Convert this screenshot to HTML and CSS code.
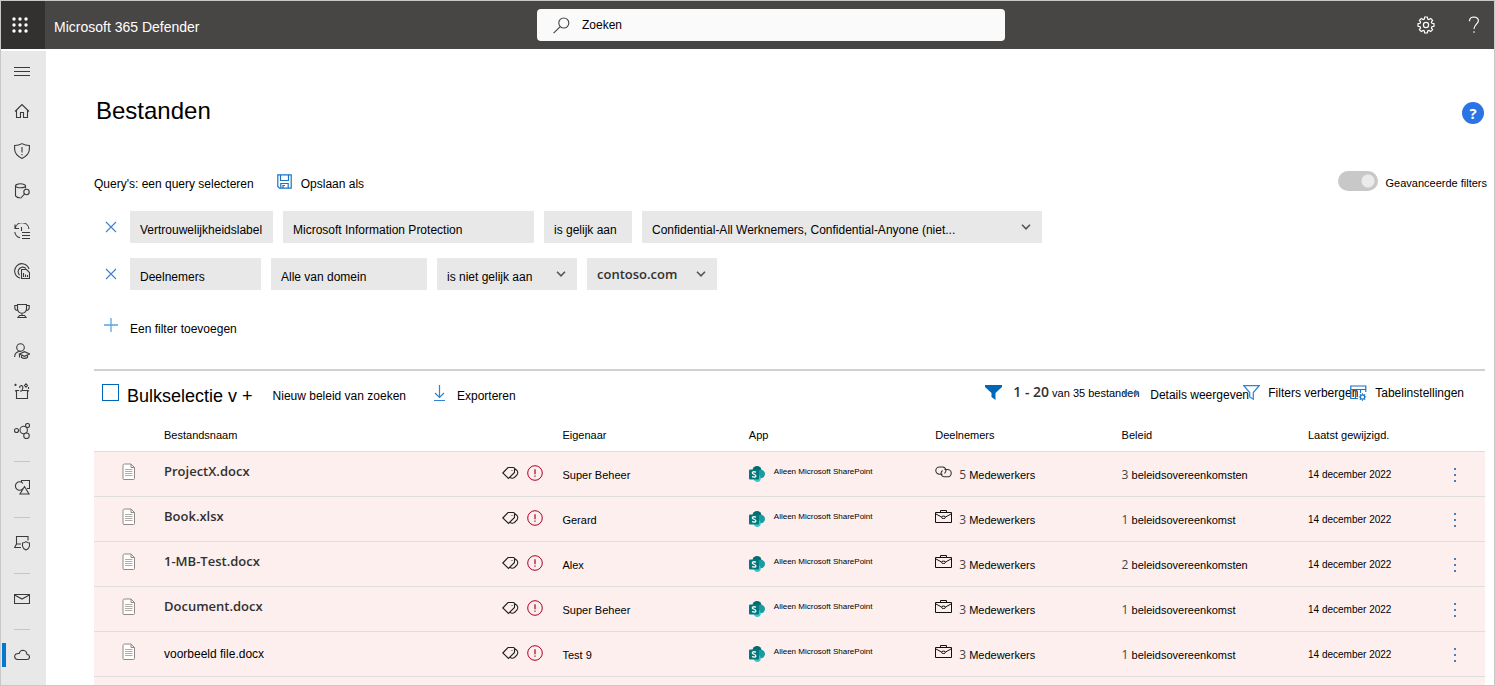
FILE: index.html
```html
<!DOCTYPE html>
<html lang="nl">
<head>
<meta charset="utf-8">
<title>Bestanden - Microsoft 365 Defender</title>
<link rel="stylesheet" href="styles.css">
</head>
<body>
<svg class="sprite" aria-hidden="true">
  <symbol id="doc" viewBox="0 0 14 18"><path d="M1 2.500Q1 1 2.500 1H9L12.500 4.500V15.500Q12.500 16.500 11.500 16.500H2Q1 16.500 1 15.500ZM9 1V4.500H12.500" fill="#fff" stroke="#8f8a88"/><path d="M3 6.500H10.500M3 8.500H10.500M3 10.500H10.500M3 12.500H10.500" stroke="#b0acaa" fill="none"/></symbol>
  <symbol id="tag" viewBox="0 0 17 16"><path d="M.8 8 6 2.500H11.500Q12.500 2.500 12.500 3.500V7.500L6.500 13.500ZM12.500 3.500 15 5.500Q16.500 7.500 15 10L12.500 12.500Q10 14 8 12.300M10 5V5.800" fill="none" stroke="#222" stroke-width="1.100"/></symbol>
  <symbol id="alert" viewBox="0 0 16 16"><circle cx="8" cy="8" r="7.300" fill="none" stroke="#a80025"/><path d="M8 4.200V9.200M8 10.500V11.800" stroke="#a80025" stroke-width="1.200"/></symbol>
  <symbol id="sp" viewBox="0 0 16 16"><circle cx="8" cy="4.500" r="4.500" fill="#036c70"/><circle cx="11.800" cy="8" r="4.200" fill="#1a9ba1"/><circle cx="8.300" cy="12.500" r="3.400" fill="#37c6d0"/><rect y="3.500" width="10" height="10" rx="1" fill="#03787c"/><path d="M7 6.200Q3.300 5 3.300 6.900C3.300 8.300 6.900 8.200 6.900 9.900Q6.900 11.700 3 10.700" fill="none" stroke="#fff" stroke-width="1.300"/></symbol>
  <symbol id="case" viewBox="0 0 17 14"><path d="M.5 2.500H16.500V12.500H.5ZM5.500 2.500V.5H11.500V2.500M1 4 6.500 7M10.500 7 16 4" fill="none" stroke="#111"/><ellipse cx="8.500" cy="7.300" rx="2" ry="1.200" fill="none" stroke="#111"/></symbol>
  <symbol id="link" viewBox="0 0 17 12"><path d="M7.500 8.200H4.500A3.700 3.600 0 0 1 4.500 1H7.500Q10.500 1.200 11 4.300 10.800 6.500 9.500 7.500M9.500 3.500H12.500A3.700 3.600 0 0 1 12.500 10.800H9.500Q6.500 10.500 6 7.500 6.200 5.500 7.500 4.500" fill="none" stroke="#333" stroke-width="1.100"/></symbol>
  <symbol id="dots" viewBox="0 0 4 16"><path d="M1 1H3V3H1ZM1 7H3V9H1ZM1 13H3V15H1Z" fill="#4a7dc0"/></symbol>
  <symbol id="chev" viewBox="0 0 10 6"><path d="M1 .8 5 4.800 9 .8" fill="none" stroke="#555" stroke-width="1.600"/></symbol>
  <symbol id="x" viewBox="0 0 12 12"><path d="M1 1 11 11M11 1 1 11" stroke="#3f7fd0" stroke-width="1.100"/></symbol>
</svg>
<div class="app">
  <header class="topbar">
    <button class="waffle" aria-label="Startprogramma voor apps"><svg width="16" height="16" viewBox="0 0 16 16" fill="#fff"><circle cx="2" cy="2" r="1.700"/><circle cx="8" cy="2" r="1.700"/><circle cx="14" cy="2" r="1.700"/><circle cx="2" cy="8" r="1.700"/><circle cx="8" cy="8" r="1.700"/><circle cx="14" cy="8" r="1.700"/><circle cx="2" cy="14" r="1.700"/><circle cx="8" cy="14" r="1.700"/><circle cx="14" cy="14" r="1.700"/></svg></button>
    <span class="brand">Microsoft 365 Defender</span>
    <label class="search"><svg width="17" height="17" viewBox="0 0 17 17" fill="none" stroke="#444" stroke-width="1.100"><circle cx="10.800" cy="6" r="5"/><path d="M7.200 9.600.6 16.200"/></svg><input type="text" placeholder="Zoeken" aria-label="Zoeken"></label>
    <div class="topactions">
      <button aria-label="Instellingen"><svg width="18" height="18" viewBox="0 0 18 18" fill="none" stroke="#fff" stroke-width="1.200"><circle cx="9" cy="9" r="2.600"/><path d="M7.700 1H10.300L10.700 3.100 11.900 3.600 13.700 2.400 15.600 4.300 14.400 6.100 14.900 7.300 17 7.700V10.300L14.900 10.700 14.400 11.900 15.600 13.700 13.700 15.600 11.900 14.400 10.700 14.900 10.300 17H7.700L7.300 14.900 6.100 14.400 4.300 15.600 2.400 13.700 3.600 11.900 3.100 10.700 1 10.300V7.700L3.100 7.300 3.600 6.100 2.400 4.300 4.300 2.400 6.100 3.600 7.300 3.100Z"/></svg></button>
      <button aria-label="Help"><svg width="12" height="18" viewBox="0 0 12 18" fill="none" stroke="#fff" stroke-width="1.200"><path d="M1.500 5.200V4.500Q2 1 5.800 1 10.300 1.200 10.400 4.800C10.400 8 6 8.500 6 13M6 15.200V16.800"/></svg></button>
    </div>
  </header>
  <div class="body">
    <nav class="rail" aria-label="Navigatie">
      <button aria-label="Menu"><svg width="16" height="16" viewBox="0 0 16 16"><path d="M0 4.500H16M0 8.500H16M0 12.500H16"/></svg></button>
      <button aria-label="Start"><svg width="16" height="16" viewBox="0 0 16 16"><path d="M1 8.500 8 1.500 15 8.500M2.500 7.500V14.500H6.500V9.500H9.500V14.500H13.500V7.500"/></svg></button>
      <button aria-label="Incidenten"><svg width="16" height="16" viewBox="0 0 16 16"><path d="M.6 2.500Q5 2.500 8 .6 11 2.500 15.400 2.500V6Q15.200 12 8 15.400 .8 12 .6 6ZM8 4V9.500M8 11V12.300"/></svg></button>
      <button aria-label="Opsporing"><svg width="16" height="16" viewBox="0 0 16 16"><ellipse cx="6.500" cy="2.800" rx="5" ry="2"/><path d="M1.500 2.800V12.500Q2 14.500 6 14.800M11.500 2.800V5.500"/><circle cx="12.500" cy="9" r="2.700"/><path d="M10.500 11 6.500 15.300"/></svg></button>
      <button aria-label="Acties"><svg width="16" height="16" viewBox="0 0 16 16"><path d="M1 1.500V5.500H5M1.200 5.300A7 7 0 0 1 15 6M.8 9A7 7 0 0 0 6 14.800M7.500 4V8M8 9.500H16M8 12.500H16M8 15.500H16"/></svg></button>
      <button aria-label="Bedreigingsanalyse"><svg width="16" height="16" viewBox="0 0 16 16"><path d="M6 15A7.300 7.300 0 1 1 15 6M5.500 12A4.500 4.500 0 1 1 12 5.500M7.500 6.500H12.500L15.500 9.500V15.500H7.500ZM9.500 10V14M11.500 11.500V14M13.500 12V14"/></svg></button>
      <button aria-label="Securescore"><svg width="16" height="16" viewBox="0 0 16 16"><path d="M3.500 1.500H12.500V6Q12 10 8 10.200 4 10 3.500 6ZM3.500 2.500H.8V5Q1 7.500 4 7.500M12.500 2.500H15.200V5Q15 7.500 12 7.500M8 10.500V12.500M5.500 12.500H10.500L12 14.500H4Z"/></svg></button>
      <button aria-label="Leerhub"><svg width="16" height="16" viewBox="0 0 16 16"><circle cx="6.500" cy="4.500" r="3.800"/><path d="M.6 14Q.8 8.500 6.500 8.300M5.500 11 10.500 8.700 15.600 11 10.500 13.300ZM7.500 12V14.500Q10.500 16.200 13.500 14.500V12M5.500 11V14.500"/></svg></button>
      <button aria-label="Proefversies"><svg width="16" height="16" viewBox="0 0 16 16"><path d="M5 7.500H2.500V15.500H13.500V7.500H8Q7 9 6 7.500M2.500 8.500 1 7.500M13.500 8.500 15 7.500M8 7Q10 3.500 7.500 2.500 5 3 6 5M1.500 .8V3M.4 1.900H2.600M12 .8 13.500 2.500 12 4.200 10.500 2.500ZM14.500 4V6"/></svg></button>
      <button aria-label="Partners"><svg width="16" height="16" viewBox="0 0 16 16"><circle cx="2.500" cy="7.500" r="2"/><circle cx="9.700" cy="7" r="3.700"/><circle cx="13.500" cy="2.500" r="2" fill="#e8e8e8"/><circle cx="12.500" cy="12.800" r="2.800" fill="#e8e8e8"/></svg></button>
      <hr>
      <button aria-label="Bronnen"><svg width="16" height="16" viewBox="0 0 16 16"><path d="M7.500 3V1.500H15.500V9.500H13M10.500 7.500 15 15H6ZM9 9.500A4.200 4.200 0 1 1 9 4.500"/></svg></button>
      <hr>
      <button aria-label="Apparaten"><svg width="16" height="16" viewBox="0 0 16 16"><path d="M2.500 9V1.500H14V5.500M2.500 9 .6 12.500H7M2.500 9H7M8.500 8Q10.500 8 12 6.700 13.500 8 15.500 8V11Q15.200 13.500 12 15 8.800 13.500 8.500 11Z"/></svg></button>
      <hr>
      <button aria-label="E-mail"><svg width="16" height="16" viewBox="0 0 16 16"><path d="M.5 3.500H15.500V12.500H.5ZM.6 4 8 8 15.400 4"/></svg></button>
      <hr>
      <button class="current" aria-label="Cloud-apps"><svg width="16" height="16" viewBox="0 0 16 16"><path d="M3.500 12.500H13A2.500 2.500 0 0 0 13 7.500Q12.500 3.500 9 3.300 6 3.300 5.300 6.500 1 6 .6 9.500 .8 12.300 3.500 12.500Z"/></svg></button>
    </nav>
    <main class="main">
      <div class="titlebar"><h1>Bestanden</h1><button class="help" aria-label="Help bij deze pagina">?</button></div>
      <div class="queries">
        <button class="query">Query's: een query selecteren</button>
        <button class="save"><svg width="15" height="15" viewBox="0 0 15 15" fill="none" stroke="#1673c8" stroke-width="1.200"><path d="M.8.800H14.200V14.200H2.500L.8 12.500ZM3.500 1V6.500H11.500V1M3.800 14V9.500H11.200V14M6 14V11.500H8"/></svg><span>Opslaan als</span></button>
        <label class="advanced"><input type="checkbox" role="switch" checked><span>Geavanceerde filters</span></label>
      </div>
      <div class="filter">
        <button class="remove" aria-label="Filter verwijderen"><svg width="12" height="12"><use href="#x"/></svg></button>
        <button class="chip w-label">Vertrouwelijkheidslabel</button>
        <button class="chip w-source">Microsoft Information Protection</button>
        <button class="chip w-op">is gelijk aan</button>
        <span class="drop w-values"><select class="chip" aria-label="Labels"><option>Confidential-All Werknemers, Confidential-Anyone (niet...</option></select><svg width="10" height="6"><use href="#chev"/></svg></span>
      </div>
      <div class="filter">
        <button class="remove" aria-label="Filter verwijderen"><svg width="12" height="12"><use href="#x"/></svg></button>
        <button class="chip w-part">Deelnemers</button>
        <button class="chip w-domain">Alle van domein</button>
        <span class="drop w-not"><select class="chip" aria-label="Operator"><option>is niet gelijk aan</option></select><svg width="10" height="6"><use href="#chev"/></svg></span>
        <span class="drop w-host"><select class="chip strong" aria-label="Domein"><option>contoso.com</option></select><svg width="10" height="6"><use href="#chev"/></svg></span>
      </div>
      <button class="add"><svg width="14" height="14" viewBox="0 0 14 14" stroke="#5ba3e0" stroke-width="1.300"><path d="M7 0V14M0 7H14"/></svg><span>Een filter toevoegen</span></button>
      <section class="results">
        <div class="tools">
          <label class="bulk"><input type="checkbox"><span>Bulkselectie v +</span></label>
          <button class="policy">Nieuw beleid van zoeken</button>
          <button class="export"><svg width="11" height="17" viewBox="0 0 11 17" fill="none" stroke="#2f83d0" stroke-width="1.200"><path d="M5.500 0V12M1 8 5.500 12.500 10 8M0 15.500H11"/></svg><span>Exporteren</span></button>
          <div class="right">
            <svg class="funnel" width="17" height="15" viewBox="0 0 17 15"><path d="M0 0H17V2L10.500 8V15L6.500 12V8L0 2Z" fill="#0067b8"/></svg>
            <span class="count"><b>1 - 20</b> van 35 bestanden</span>
            <button class="t-details"><svg width="16" height="8" viewBox="0 0 16 8" fill="none" stroke="#2f83d0" stroke-width="1.200"><path d="M1 4H15M4 1 1 4 4 7M12 1 15 4 12 7"/></svg><span>Details weergeven</span></button>
            <button class="t-filters"><svg width="17" height="15" viewBox="0 0 17 15" fill="none" stroke="#2f83d0" stroke-width="1.200"><path d="M.8.700H16.200L10.300 7.500V14.200L6.700 12V7.500Z"/></svg><span>Filters verbergen</span></button>
            <button class="t-table"><svg width="17" height="16" viewBox="0 0 17 16" fill="none" stroke="#1673c8" stroke-width="1.200"><path d="M8 13.500H.8V1H15.800V7M.8 4.500H15.800M5.500 4.500V13.500M10.500 4.500V8"/><circle cx="12.500" cy="12" r="2.100"/><path d="M12.500 8.300V9.500M12.500 14.500V15.700M8.800 12H10M15 12H16.200M9.900 9.400 10.700 10.200M15.100 9.400 14.300 10.200M9.900 14.600 10.700 13.800M15.100 14.600 14.300 13.800"/></svg><span>Tabelinstellingen</span></button>
          </div>
        </div>
        <table>
          <colgroup><col class="c-icon"><col><col class="c-flags"><col class="c-data"><col class="c-data"><col class="c-data"><col class="c-data"><col class="c-date"><col class="c-menu"></colgroup>
          <thead><tr><th></th><th>Bestandsnaam</th><th></th><th>Eigenaar</th><th>App</th><th>Deelnemers</th><th>Beleid</th><th>Laatst gewijzigd.</th><th></th></tr></thead>
          <tbody>
            <tr><td class="file"><svg width="14" height="18"><use href="#doc"/></svg></td><td><a class="name" href="#">ProjectX.docx</a></td><td><span class="flags"><svg width="17" height="16"><use href="#tag"/></svg><svg width="16" height="16"><use href="#alert"/></svg></span></td><td>Super Beheer</td><td><span class="service"><svg width="16" height="16"><use href="#sp"/></svg><span>Alleen Microsoft SharePoint</span></span></td><td><span class="people"><svg width="17" height="12"><use href="#link"/></svg><span><i>5</i> Medewerkers</span></span></td><td><i>3</i> beleidsovereenkomsten</td><td class="date">14 december 2022</td><td><button class="more" aria-label="Meer"><svg width="4" height="16"><use href="#dots"/></svg></button></td></tr>
            <tr><td class="file"><svg width="14" height="18"><use href="#doc"/></svg></td><td><a class="name" href="#">Book.xlsx</a></td><td><span class="flags"><svg width="17" height="16"><use href="#tag"/></svg><svg width="16" height="16"><use href="#alert"/></svg></span></td><td>Gerard</td><td><span class="service"><svg width="16" height="16"><use href="#sp"/></svg><span>Alleen Microsoft SharePoint</span></span></td><td><span class="people"><svg width="17" height="14"><use href="#case"/></svg><span><i>3</i> Medewerkers</span></span></td><td><i>1</i> beleidsovereenkomst</td><td class="date">14 december 2022</td><td><button class="more" aria-label="Meer"><svg width="4" height="16"><use href="#dots"/></svg></button></td></tr>
            <tr><td class="file"><svg width="14" height="18"><use href="#doc"/></svg></td><td><a class="name" href="#">1-MB-Test.docx</a></td><td><span class="flags"><svg width="17" height="16"><use href="#tag"/></svg><svg width="16" height="16"><use href="#alert"/></svg></span></td><td>Alex</td><td><span class="service"><svg width="16" height="16"><use href="#sp"/></svg><span>Alleen Microsoft SharePoint</span></span></td><td><span class="people"><svg width="17" height="14"><use href="#case"/></svg><span><i>3</i> Medewerkers</span></span></td><td><i>2</i> beleidsovereenkomsten</td><td class="date">14 december 2022</td><td><button class="more" aria-label="Meer"><svg width="4" height="16"><use href="#dots"/></svg></button></td></tr>
            <tr><td class="file"><svg width="14" height="18"><use href="#doc"/></svg></td><td><a class="name" href="#">Document.docx</a></td><td><span class="flags"><svg width="17" height="16"><use href="#tag"/></svg><svg width="16" height="16"><use href="#alert"/></svg></span></td><td>Super Beheer</td><td><span class="service"><svg width="16" height="16"><use href="#sp"/></svg><span>Alleen Microsoft SharePoint</span></span></td><td><span class="people"><svg width="17" height="14"><use href="#case"/></svg><span><i>3</i> Medewerkers</span></span></td><td><i>1</i> beleidsovereenkomst</td><td class="date">14 december 2022</td><td><button class="more" aria-label="Meer"><svg width="4" height="16"><use href="#dots"/></svg></button></td></tr>
            <tr><td class="file"><svg width="14" height="18"><use href="#doc"/></svg></td><td><a class="name plain" href="#">voorbeeld file.docx</a></td><td><span class="flags"><svg width="17" height="16"><use href="#tag"/></svg><svg width="16" height="16"><use href="#alert"/></svg></span></td><td>Test 9</td><td><span class="service"><svg width="16" height="16"><use href="#sp"/></svg><span>Alleen Microsoft SharePoint</span></span></td><td><span class="people"><svg width="17" height="14"><use href="#case"/></svg><span><i>3</i> Medewerkers</span></span></td><td><i>1</i> beleidsovereenkomst</td><td class="date">14 december 2022</td><td><button class="more" aria-label="Meer"><svg width="4" height="16"><use href="#dots"/></svg></button></td></tr>
            <tr><td colspan="9"></td></tr>
          </tbody>
        </table>
      </section>
    </main>
  </div>
</div>
</body>
</html>
```
FILE: styles.css
```css
* { box-sizing: border-box; }
body { margin: 0; background: #fff; color: #000; font: 12px/16px "Liberation Sans", Arial, sans-serif; }
button, input, select { font: inherit; color: inherit; border: 0; padding: 0; margin: 0; background: none; white-space: nowrap; }
svg { display: block; flex: none; }
.sprite { position: absolute; width: 0; height: 0; }
.app { height: 100vh; display: flex; flex-direction: column; overflow: hidden; border: 1px solid #c8c8c8; }

.topbar { flex: none; display: flex; align-items: center; height: 48px; background: #484644; color: #fff; }
.waffle { width: 44px; height: 48px; display: grid; place-items: center; background: #323130; padding-right: 6px; }
.brand { flex: 1 1 18px; padding: 4px 0 0 9px; font-size: 14px; }
.search { flex: 0 1 468px; display: flex; align-items: center; gap: 12px; height: 32px; padding: 0 16px; border-radius: 4px; background: #fafafa; color: #000; }
.search input { flex: 1; min-width: 0; outline: 0; }
.search input::placeholder { color: #000; opacity: 1; }
.topactions { flex: 1 1 15px; display: flex; justify-content: flex-end; gap: 33px; padding-right: 14px; }

.body { flex: 1; min-height: 0; display: flex; padding-top: 2px; }
.rail { flex: 0 0 45px; display: flex; flex-direction: column; background: #e8e8e8; overflow: hidden; }
.rail button { flex: none; height: 40px; padding-left: 13px; }
.rail svg { fill: none; stroke: #3b3a39; stroke-width: 1.1; }
.rail hr { flex: none; width: 16px; height: 1px; margin: 10px 0 5px 13px; border: 0; background: #c4c4c4; }
.rail .current { height: 24px; margin: 8px 0 8px 1px; padding-left: 8px; border-left: 4px solid #0078d4; }

.main { flex: 1; min-width: 0; padding: 46px 9px 0 48px; }
.titlebar { display: flex; align-items: center; justify-content: space-between; height: 28px; padding-left: 2px; }
h1 { margin: 0; font-size: 24px; line-height: 28px; font-weight: 400; }
.help { width: 22px; height: 22px; margin: 4px 1px 0 0; border-radius: 50%; background: #2a74e4; color: #fff; font: 700 15px/22px "Open Sans", sans-serif; }
.queries { display: flex; align-items: center; height: 24px; margin-top: 46px; }
.save { display: flex; align-items: center; gap: 9px; margin-left: 23px; }
.save svg { margin-bottom: 4px; }
.save span, .query { padding-top: 2px; }
.advanced { display: flex; align-items: center; gap: 8px; margin: 0 -2px 4px auto; font-size: 11px; }
.advanced span { padding-top: 4px; }
.advanced input { appearance: none; width: 40px; height: 20px; border-radius: 10px; background: radial-gradient(circle at 30px 10px, #ebebeb 6px, #c8c8c8 7px); }

.filter { display: flex; gap: 10px; height: 32px; margin-top: 15px; }
.queries + .filter { margin-top: 16px; }
.remove { width: 26px; padding-left: 11px; }
.chip { height: 32px; padding: 5px 0 0 10px; background: #e8e8e8; text-align: left; }
.drop { display: grid; align-items: center; }
.drop > * { grid-area: 1 / 1; }
.drop select { appearance: none; width: 100%; border-radius: 0; }
.drop svg { justify-self: end; margin-right: 11px; pointer-events: none; }
.chip.strong { padding-top: 0; color: #323130; font: 600 13px/20px "Open Sans", sans-serif; }
.w-label { width: 143px; }
.w-source { width: 251px; }
.w-op { width: 88px; }
.w-values { width: 400px; }
.w-part { width: 131px; }
.w-domain { width: 156px; }
.w-not { width: 140px; }
.w-host { width: 130px; }
.add { display: flex; align-items: center; gap: 12px; height: 24px; margin-top: 25px; padding-left: 10px; }
.add svg { margin-bottom: 4px; }
.add span { padding-top: 3px; }

.results { margin-top: 30px; border-top: 2px solid #d0d0d0; }
.tools { display: flex; align-items: center; height: 45px; padding-left: 8px; }
.tools button { display: flex; align-items: center; flex: none; }
.bulk { display: flex; align-items: center; gap: 8px; font-size: 18px; line-height: 24px; white-space: nowrap; }
.bulk span { padding-top: 4px; }
.bulk input { appearance: none; width: 17px; height: 17px; margin-bottom: 2px; border: 1px solid #0067b8; }
.tools .policy { margin-left: 20px; padding-top: 4px; }
.tools .export { gap: 12px; margin-left: 28px; }
.export span { padding-top: 4px; }
.right { display: flex; align-items: center; margin-left: auto; padding: 0 21px 2px 0; white-space: nowrap; }
.count { width: 110px; margin-left: 11px; font-size: 11px; }
.count b { color: #323130; font: 600 14px/16px "Open Sans", sans-serif; }
.right .t-details { width: 120px; gap: 11px; }
.t-details span { padding-top: 4px; }
.right .t-filters { width: 107px; gap: 8px; }
.right .t-table { gap: 8px; }

table { width: 100%; table-layout: fixed; border-collapse: collapse; font-size: 11px; }
.c-icon { width: 70px; }
.c-flags { width: 60px; }
.c-data { width: 13.4%; }
.c-date { width: 130px; }
.c-menu { width: 47px; }
th { height: 35px; padding: 4px 0 0; font-weight: 400; text-align: left; }
td { height: 45px; padding: 2px 0 0; border-top: 1px solid #dfdedd; background: #fdefee; white-space: nowrap; }
.file { padding: 0 0 4px 28px; }
td i { color: #484644; font: 12px/16px "Open Sans", sans-serif; }
.date { font-size: 10px; }
.name { display: block; padding-bottom: 8px; color: #323130; font: 600 13px/18px "Open Sans", sans-serif; text-decoration: none; }
.name.plain { padding-bottom: 2px; color: #000; font: 12px/18px "Liberation Sans", Arial, sans-serif; }
.flags { display: flex; gap: 8px; padding-bottom: 4px; }
.service { display: flex; align-items: center; gap: 9px; font-size: 8px; padding-bottom: 2px; }
.service span { padding-bottom: 4px; }
.people { display: flex; align-items: center; gap: 7px; }
.people svg { margin-bottom: 6px; }
.more { display: block; padding-left: 15px; }
```
